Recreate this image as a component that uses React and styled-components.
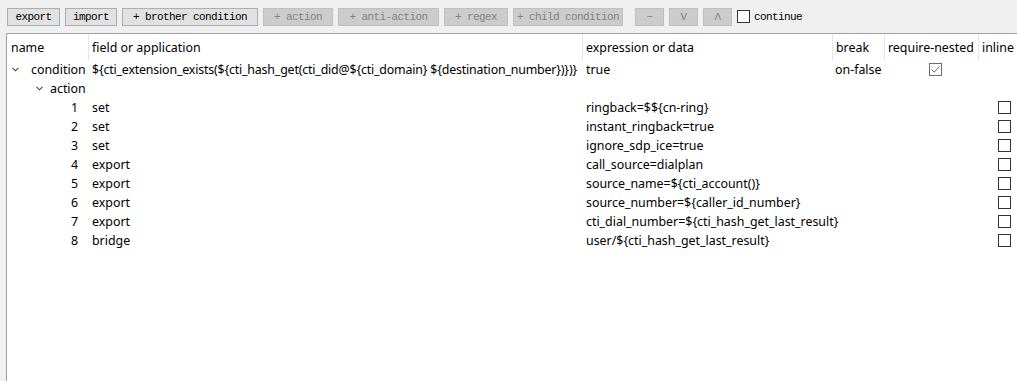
import React from "react";
import styled, { createGlobalStyle } from "styled-components";

const GlobalStyle = createGlobalStyle`
  html, body {
    margin: 0;
    padding: 0;
    background: #f0f0f0;
    overflow: hidden;
  }
`;

const monoFont = `"Liberation Mono", "DejaVu Sans Mono", monospace`;
const uiFont = `"Noto Sans", "Open Sans", sans-serif`;

const Page = styled.div`
  width: 1017px;
  height: 381px;
  display: flex;
  flex-direction: column;
  background: #f0f0f0;
`;

const Toolbar = styled.div`
  display: flex;
  align-items: center;
  gap: 5px;
  height: 33px;
  padding: 0 7px;
  box-sizing: border-box;
`;

const Button = styled.button`
  width: ${(p) => p.$w}px;
  height: 18px;
  margin: 0 0 0 ${(p) => p.$gap || 0}px;
  padding: 0;
  box-sizing: border-box;
  font-family: ${monoFont};
  font-size: 11px;
  letter-spacing: -0.6px;
  white-space: pre;
  background: ${(p) => (p.disabled ? "#cccccc" : "#e1e1e1")};
  border: 1px solid ${(p) => (p.disabled ? "#bfbfbf" : "#adadad")};
  color: ${(p) => (p.disabled ? "#838383" : "#000")};
  border-radius: 0;
`;

const ContinueLabel = styled.label`
  display: flex;
  align-items: center;
  gap: 4px;
  font-family: ${monoFont};
  font-size: 11px;
  letter-spacing: -0.6px;
  color: #000;
`;

const Box = styled.span`
  width: 13px;
  height: 13px;
  box-sizing: border-box;
  border: 1px solid ${(p) => (p.$checked ? "#6d6d6d" : "#333")};
  background: #fff;
  display: inline-flex;
  align-items: center;
  justify-content: center;
  flex: none;
`;

const Panel = styled.div`
  flex: 1;
  margin-left: 6px;
  border-left: 1px solid #a0a0a0;
  border-top: 1px solid #a0a0a0;
  background: #fff;
  overflow: hidden;
  font-family: ${uiFont};
  font-size: 12.4px;
  color: #000;
`;

const columns = "81px 494px 250px 52px 94px 53px";

const HeaderRow = styled.div`
  display: grid;
  grid-template-columns: ${columns};
  height: 26px;
`;

const HeadCell = styled.div`
  display: flex;
  align-items: center;
  padding-left: ${(p) => (p.$first ? 4 : 3)}px;
  white-space: nowrap;
  overflow: hidden;
  border-left: ${(p) => (p.$first ? "none" : "1px solid #e5e5e5")};
`;

const Row = styled.div`
  display: grid;
  grid-template-columns: ${columns};
  height: 19px;
`;

const Cell = styled.div`
  display: flex;
  align-items: center;
  padding-left: ${(p) => (p.$pad === undefined ? 4 : p.$pad)}px;
  letter-spacing: ${(p) => (p.$tight ? "-0.18px" : "normal")};
  white-space: nowrap;
  overflow: visible;
`;

const NameCell = styled.div`
  display: flex;
  align-items: center;
  gap: ${(p) => p.$gap}px;
  padding-left: ${(p) => p.$indent}px;
  white-space: nowrap;

  svg {
    flex: none;
  }
`;

const IndexCell = styled.div`
  display: flex;
  align-items: center;
  justify-content: flex-end;
  padding-right: 10px;
`;

const Chevron = () => (
  <svg width="7" height="5" viewBox="0 0 7 5">
    <polyline points="0.5,0.8 3.5,3.8 6.5,0.8" fill="none" stroke="#444" strokeWidth="1.1" />
  </svg>
);

const Check = () => (
  <svg width="11" height="11" viewBox="0 0 11 11">
    <polyline points="1.5,5.5 4.2,8.2 9.5,2.2" fill="none" stroke="#6d6d6d" strokeWidth="1" />
  </svg>
);

const actions = [
  ["set", "ringback=$${cn-ring}"],
  ["set", "instant_ringback=true"],
  ["set", "ignore_sdp_ice=true"],
  ["export", "call_source=dialplan"],
  ["export", "source_name=${cti_account()}"],
  ["export", "source_number=${caller_id_number}"],
  ["export", "cti_dial_number=${cti_hash_get_last_result}"],
  ["bridge", "user/${cti_hash_get_last_result}"],
];

const tools = [
  { label: "export", w: 53 },
  { label: "import", w: 52 },
  { label: "+ brother condition", w: 136 },
  { label: "+ action", w: 70, off: true },
  { label: "+ anti-action", w: 101, off: true },
  { label: "+ regex", w: 64, off: true },
  { label: "+ child condition", w: 110, off: true },
  { label: "\u2212", w: 29, off: true, gap: 7 },
  { label: "V", w: 29, off: true },
  { label: "\u039B", w: 29, off: true },
];

export default function App() {
  return (
    <Page>
      <GlobalStyle />
      <Toolbar>
        {tools.map((t) => (
          <Button key={t.label} $w={t.w} $gap={t.gap} disabled={t.off}>
            {t.label}
          </Button>
        ))}
        <ContinueLabel>
          <Box />
          continue
        </ContinueLabel>
      </Toolbar>
      <Panel>
        <HeaderRow>
          <HeadCell $first>name</HeadCell>
          <HeadCell>field or application</HeadCell>
          <HeadCell>expression or data</HeadCell>
          <HeadCell>break</HeadCell>
          <HeadCell>require-nested</HeadCell>
          <HeadCell>inline</HeadCell>
        </HeaderRow>
        <Row>
          <NameCell $indent={5} $gap={12}>
            <Chevron />
            condition
          </NameCell>
          <Cell $tight>{"${cti_extension_exists(${cti_hash_get(cti_did@${cti_domain} ${destination_number})})}"}</Cell>
          <Cell>true</Cell>
          <Cell $pad={3}>on-false</Cell>
          <Cell $pad={45}>
            <Box $checked>
              <Check />
            </Box>
          </Cell>
          <Cell />
        </Row>
        <Row>
          <NameCell $indent={29} $gap={7}>
            <Chevron />
            action
          </NameCell>
          <Cell />
          <Cell />
          <Cell />
          <Cell />
          <Cell />
        </Row>
        {actions.map(([app, data], i) => (
          <Row key={i}>
            <IndexCell>{i + 1}</IndexCell>
            <Cell>{app}</Cell>
            <Cell>{data}</Cell>
            <Cell />
            <Cell />
            <Cell $pad={20}>
              <Box />
            </Cell>
          </Row>
        ))}
      </Panel>
    </Page>
  );
}
